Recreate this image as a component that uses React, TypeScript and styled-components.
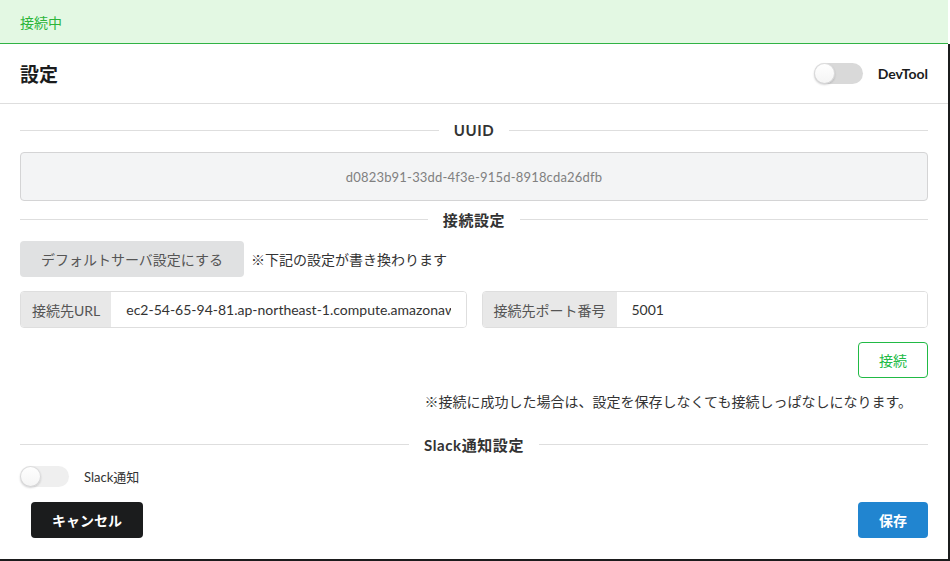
import React, { useState } from "react";
import styled, { createGlobalStyle } from "styled-components";

const GlobalStyle = createGlobalStyle`
  html, body {
    margin: 0;
    padding: 0;
    background: #ffffff;
  }
  body {
    font-family: Lato, "Noto Sans CJK JP", "Noto Sans", sans-serif;
    font-size: 14px;
    color: rgba(0, 0, 0, 0.87);
  }
  * {
    box-sizing: border-box;
  }
`;

const Page = styled.div`
  width: 950px;
  height: 561px;
  display: flex;
  flex-direction: column;
  overflow: hidden;
`;

const StatusBar = styled.div`
  width: 948px;
  height: 44px;
  flex-shrink: 0;
  display: flex;
  align-items: center;
  padding: 0 20px;
  background: #e3f8e3;
  border-bottom: 1px solid #2fb344;
  color: #2cb53a;
  font-size: 14px;
`;

const Modal = styled.div`
  flex: 1;
  display: flex;
  flex-direction: column;
  background: #ffffff;
  border-right: 2px solid #1b1c1d;
  border-bottom: 2px solid #1b1c1d;
`;

const Header = styled.div`
  height: 60px;
  display: flex;
  align-items: center;
  justify-content: space-between;
  padding: 0 20px;
  border-bottom: 1px solid #dedede;
`;

const Title = styled.h1`
  margin: 0;
  font-size: 19px;
  font-weight: 700;
  color: #1b1c1d;
`;

const ToggleWrap = styled.label`
  display: flex;
  align-items: center;
  gap: 15px;
  cursor: pointer;
  font-size: 14px;
`;

const Track = styled.span<{ $dark?: boolean; $on?: boolean }>`
  position: relative;
  display: inline-block;
  width: 49px;
  height: 21px;
  border-radius: 500px;
  background: ${(p) => (p.$on ? "#2185d0" : p.$dark ? "#d9d9d9" : "#efefef")};
`;

const Knob = styled.span<{ $on?: boolean }>`
  position: absolute;
  top: 0;
  left: ${(p) => (p.$on ? "28px" : "0")};
  width: 21px;
  height: 21px;
  border-radius: 50%;
  background: linear-gradient(#ffffff, #f4f4f4);
  box-shadow: 0 1px 2px 0 rgba(34, 36, 38, 0.2), 0 0 0 1px rgba(34, 36, 38, 0.15) inset;
`;

const ToggleLabel = styled.span<{ $bold?: boolean }>`
  font-weight: ${(p) => (p.$bold ? 700 : 400)};
  color: ${(p) => (p.$bold ? "#1b1c1d" : "#333")};
  font-size: ${(p) => (p.$bold ? "14px" : "13px")};
`;

const Content = styled.div`
  flex: 1;
  display: flex;
  flex-direction: column;
  padding: 16px 20px 0 20px;
`;

const Divider = styled.div<{ $mt?: number }>`
  display: flex;
  align-items: center;
  gap: 15px;
  height: 20px;
  margin-top: ${(p) => p.$mt ?? 0}px;
  font-weight: 700;
  font-size: 15px;
  letter-spacing: 0.6px;
  color: #333;
  &::before,
  &::after {
    content: "";
    flex: 1;
    border-top: 1px solid #dedede;
  }
`;

const UuidBox = styled.div`
  margin-top: 12px;
  height: 49px;
  display: flex;
  align-items: center;
  justify-content: center;
  background: #f3f4f5;
  border: 1px solid #d4d4d5;
  border-radius: 4px;
  color: #808080;
  font-size: 13px;
  letter-spacing: 0.2px;
`;

const Row = styled.div<{ $mt?: number; $justify?: string }>`
  display: flex;
  align-items: center;
  justify-content: ${(p) => p.$justify ?? "flex-start"};
  gap: 15px;
  margin-top: ${(p) => p.$mt ?? 0}px;
`;

const GreyButton = styled.button`
  height: 36px;
  padding: 0 21px;
  border: none;
  border-radius: 4px;
  background: #e0e1e2;
  color: #555;
  font-family: inherit;
  font-size: 14px;
  cursor: pointer;
`;

const Hint = styled.span`
  color: #333;
  font-size: 14px;
  margin-left: -8px;
`;

const LabeledInput = styled.div`
  flex: 1;
  display: flex;
  height: 37px;
  border: 1px solid #dedede;
  border-radius: 4px;
  overflow: hidden;
`;

const InputLabel = styled.div`
  display: flex;
  align-items: center;
  padding: 0 11px;
  background: #e8e8e8;
  color: #555;
  font-size: 14px;
  white-space: nowrap;
`;

const Input = styled.input`
  flex: 1;
  min-width: 0;
  border: none;
  outline: none;
  padding: 0 15px;
  font-family: inherit;
  font-size: 14px;
  color: #333;
  background: #fff;
`;

const OutlineButton = styled.button`
  width: 70px;
  height: 36px;
  border: 1px solid #21ba45;
  border-radius: 4px;
  background: #fff;
  color: #21ba45;
  font-family: inherit;
  font-size: 14px;
  cursor: pointer;
`;

const Note = styled.div`
  margin-top: 13px;
  padding-right: 16px;
  text-align: right;
  font-size: 14px;
  color: #333;
`;

const Footer = styled.div`
  display: flex;
  justify-content: space-between;
  align-items: center;
  margin-top: 15px;
  padding-left: 11px;
`;

const SolidButton = styled.button<{ $color: string; $wide?: boolean }>`
  height: 36px;
  width: ${(p) => (p.$wide ? "112px" : "70px")};
  border: none;
  border-radius: 4px;
  background: ${(p) => p.$color};
  color: #fff;
  font-family: inherit;
  font-weight: 700;
  font-size: 14px;
  cursor: pointer;
`;

function Toggle({ label, dark, bold }: { label: string; dark?: boolean; bold?: boolean }) {
  const [on, setOn] = useState(false);
  return (
    <ToggleWrap onClick={() => setOn(!on)}>
      <Track $dark={dark} $on={on}>
        <Knob $on={on} />
      </Track>
      <ToggleLabel $bold={bold}>{label}</ToggleLabel>
    </ToggleWrap>
  );
}

export default function App() {
  const [url, setUrl] = useState("ec2-54-65-94-81.ap-northeast-1.compute.amazonaws.com");
  const [port, setPort] = useState("5001");

  return (
    <Page>
      <GlobalStyle />
      <StatusBar>接続中</StatusBar>
      <Modal>
        <Header>
          <Title>設定</Title>
          <Toggle label="DevTool" dark bold />
        </Header>
        <Content>
          <Divider>UUID</Divider>
          <UuidBox>d0823b91-33dd-4f3e-915d-8918cda26dfb</UuidBox>
          <Divider $mt={8}>接続設定</Divider>
          <Row $mt={12}>
            <GreyButton>デフォルトサーバ設定にする</GreyButton>
            <Hint>※下記の設定が書き換わります</Hint>
          </Row>
          <Row $mt={14}>
            <LabeledInput>
              <InputLabel>接続先URL</InputLabel>
              <Input value={url} onChange={(e) => setUrl(e.target.value)} />
            </LabeledInput>
            <LabeledInput>
              <InputLabel>接続先ポート番号</InputLabel>
              <Input value={port} onChange={(e) => setPort(e.target.value)} />
            </LabeledInput>
          </Row>
          <Row $mt={14} $justify="flex-end">
            <OutlineButton>接続</OutlineButton>
          </Row>
          <Note>※接続に成功した場合は、設定を保存しなくても接続しっぱなしになります。</Note>
          <Divider $mt={23}>Slack通知設定</Divider>
          <Row $mt={12}>
            <Toggle label="Slack通知" />
          </Row>
          <Footer>
            <SolidButton $color="#1b1c1d" $wide>キャンセル</SolidButton>
            <SolidButton $color="#2185d0">保存</SolidButton>
          </Footer>
        </Content>
      </Modal>
    </Page>
  );
}
